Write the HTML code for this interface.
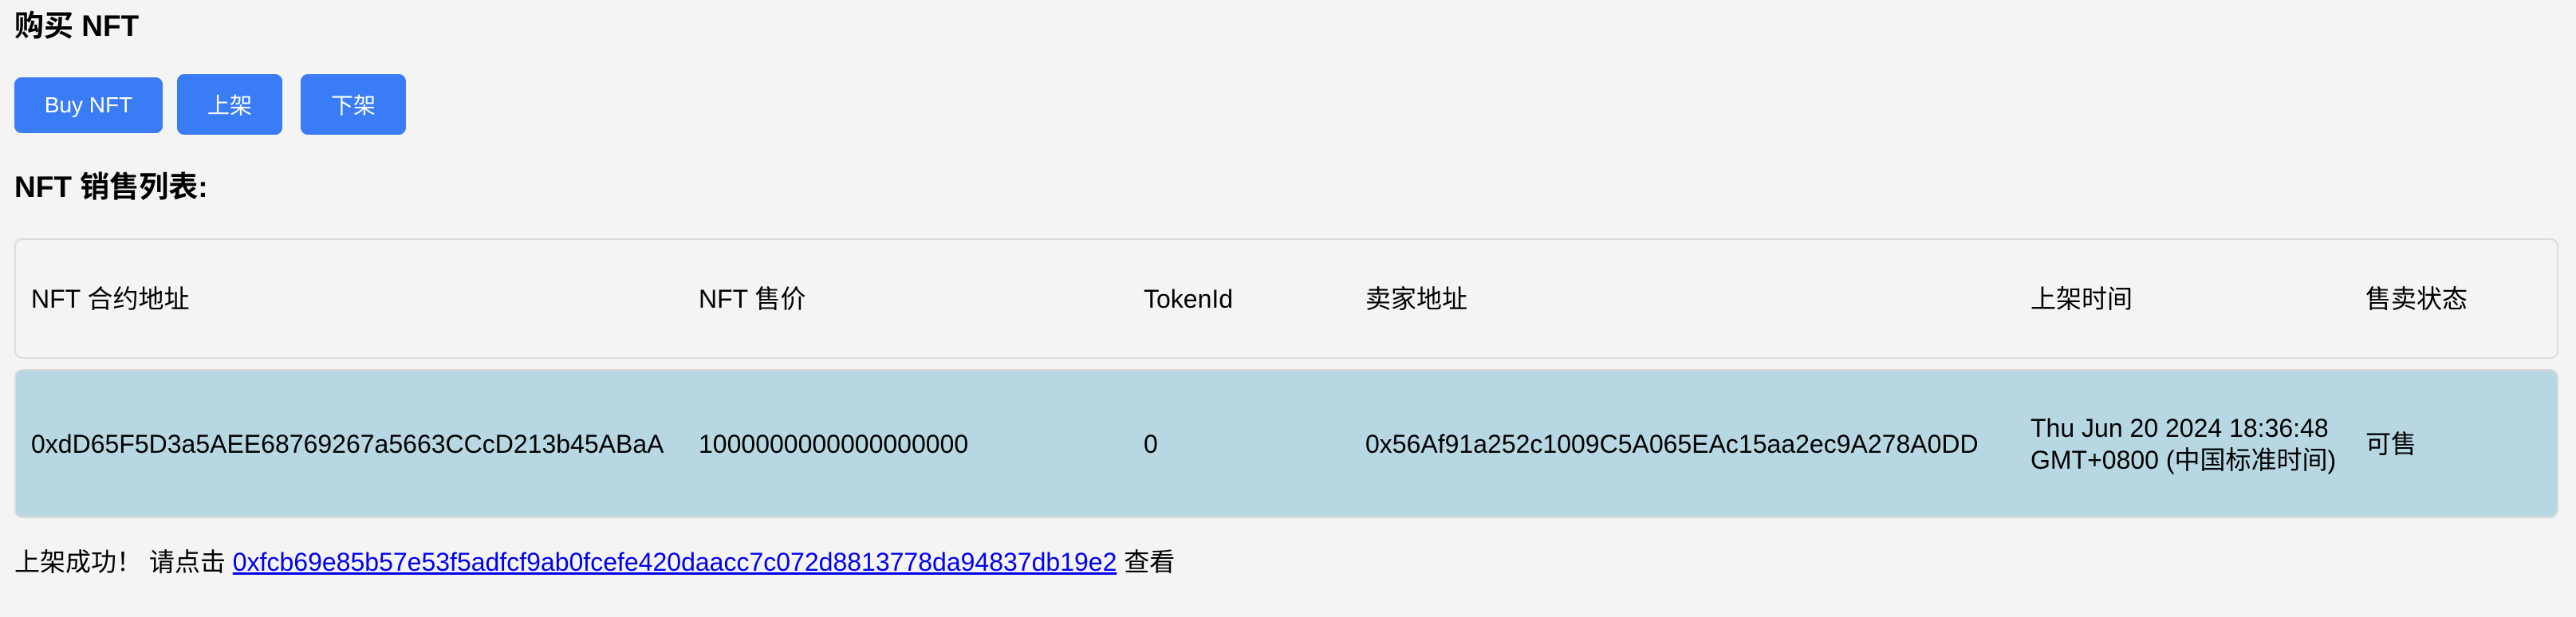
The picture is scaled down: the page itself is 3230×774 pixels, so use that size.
<!DOCTYPE html>
<html><head><meta charset="utf-8"><style>
*{box-sizing:border-box;margin:0;padding:0}
body{width:3230px;height:774px;background:#f4f4f4;font-family:"Liberation Sans","Noto Sans CJK SC",sans-serif;color:#000;position:relative;overflow:hidden}
.abs{position:absolute}
h3{position:absolute;font-size:37px;font-weight:bold;left:18px;line-height:44px}
.btn{position:absolute;background:#3a7cf6;color:#fff;font-size:28px;border-radius:9px;display:flex;align-items:center;justify-content:center}
.row{position:absolute;left:18px;width:3190px;border:2px solid #dcdcdc;border-radius:10px;font-size:32px}
.row div{position:absolute;top:0;bottom:0;display:flex;align-items:center;line-height:40px}
a{color:#0000ee;text-decoration:underline}
</style></head><body>
<h3 style="top:11px">购买 NFT</h3>
<div class="btn" style="left:18px;top:97px;width:186px;height:70px">Buy NFT</div>
<div class="btn" style="left:222px;top:93px;width:132px;height:76px">上架</div>
<div class="btn" style="left:377px;top:93px;width:132px;height:76px">下架</div>
<h3 style="top:213px">NFT 销售列表:</h3>
<div class="row" style="top:299px;height:151px">
<div style="left:19px">NFT 合约地址</div>
<div style="left:856px">NFT 售价</div>
<div style="left:1414px">TokenId</div>
<div style="left:1692px">卖家地址</div>
<div style="left:2526px">上架时间</div>
<div style="left:2946px">售卖状态</div>
</div>
<div class="row" style="top:463px;height:187px;background:#b7d8e3">
<div style="left:19px">0xdD65F5D3a5AEE68769267a5663CCcD213b45ABaA</div>
<div style="left:856px">1000000000000000000</div>
<div style="left:1414px">0</div>
<div style="left:1692px">0x56Af91a252c1009C5A065EAc15aa2ec9A278A0DD</div>
<div style="left:2526px;width:410px">Thu Jun 20 2024 18:36:48 GMT+0800 (中国标准时间)</div>
<div style="left:2946px">可售</div>
</div>
<div class="abs" style="left:18px;top:685px;font-size:32px;line-height:40px;white-space:nowrap">上架成功！ 请点击 <a>0xfcb69e85b57e53f5adfcf9ab0fcefe420daacc7c072d8813778da94837db19e2</a> 查看</div>
</body></html>
